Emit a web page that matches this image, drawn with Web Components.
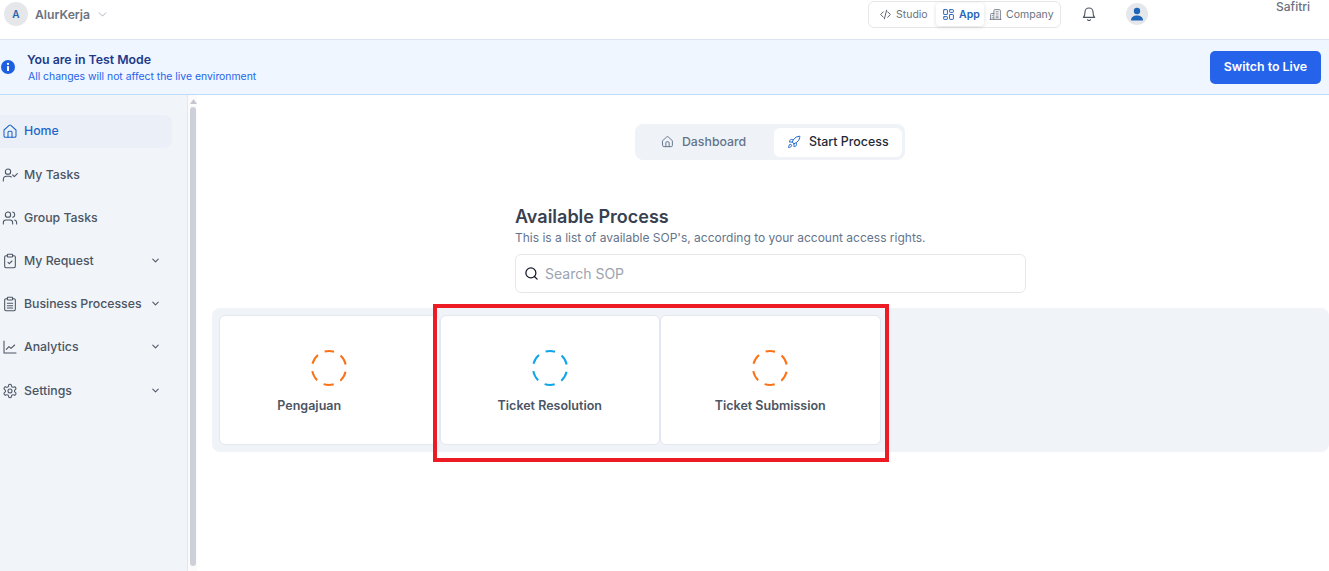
<!DOCTYPE html>
<html lang="en">
<head>
<meta charset="utf-8">
<title>Available Process</title>
<style>
	html, body { margin: 0; height: 100%; overflow: hidden; background: #fff; }
	body { font-family: Inter, "Noto Sans", sans-serif; color: #374151; }
	app-page { height: 571px; }
</style>
</head>
<body>
<app-page>
	<top-bar slot="top"></top-bar>
	<test-banner slot="top"></test-banner>
	<side-nav slot="side">
		<nav-item icon="home" active>Home</nav-item>
		<nav-item icon="task" gap="11">My Tasks</nav-item>
		<nav-item icon="group" gap="10">Group Tasks</nav-item>
		<nav-item icon="request" gap="10" more>My Request</nav-item>
		<nav-item icon="clipboard" gap="10" more>Business Processes</nav-item>
		<nav-item icon="chart" gap="10" more>Analytics</nav-item>
		<nav-item icon="gear" gap="11" more>Settings</nav-item>
	</side-nav>
	<process-tabs></process-tabs>
	<process-head></process-head>
	<process-list>
		<process-card color="#f97316" shift="40">Pengajuan</process-card>
		<process-card color="#0ea5e9">Ticket Resolution</process-card>
		<process-card color="#f97316">Ticket Submission</process-card>
	</process-list>
</app-page>

<script>
	const icons = {
		home: '<path d="M3 10.500 10.700 3.500a2 2 0 0 1 2.600 0L21 10.500V19.500a2 2 0 0 1-2 2H5a2 2 0 0 1-2-2z"/><path d="M9 21.500V14a1.500 1.500 0 0 1 1.500-1.500h3A1.500 1.500 0 0 1 15 14v7.500"/>',
		task: '<circle cx="9" cy="7" r="4"/><path d="M2 21v-2a5 5 0 0 1 5-5h4a5 5 0 0 1 3 1"/><path d="m16 12 2.500 2.500L23 10"/>',
		group: '<circle cx="9" cy="7" r="4"/><path d="M2 21v-2a4 4 0 0 1 4-4h6a4 4 0 0 1 4 4v2"/><path d="M16 3.100a4 4 0 0 1 0 7.800"/><path d="M22 21v-2a4 4 0 0 0-3-3.900"/>',
		request: '<rect x="8" y="2" width="8" height="4" rx="1"/><path d="M16 4h2a2 2 0 0 1 2 2v14a2 2 0 0 1-2 2H6a2 2 0 0 1-2-2V6a2 2 0 0 1 2-2h2"/><path d="m9 14 2 2 4-4"/>',
		clipboard: '<rect x="8" y="2" width="8" height="4" rx="1"/><path d="M16 4h2a2 2 0 0 1 2 2v14a2 2 0 0 1-2 2H6a2 2 0 0 1-2-2V6a2 2 0 0 1 2-2h2"/><path d="M8 11h8M8 14.500h8M8 18h8"/>',
		chart: '<path d="M3 3v18h18"/><path d="m6.500 15.500 4-4 3 2.500 5.500-5"/>',
		gear: '<circle cx="12" cy="12" r="3"/><path d="M12.200 2h-.4a2 2 0 0 0-2 2v.2a2 2 0 0 1-1 1.700l-.4.3a2 2 0 0 1-2 0l-.2-.1a2 2 0 0 0-2.700.7l-.2.4a2 2 0 0 0 .7 2.700l.2.1a2 2 0 0 1 1 1.700v.5a2 2 0 0 1-1 1.800l-.2.1a2 2 0 0 0-.7 2.700l.2.4a2 2 0 0 0 2.700.7l.2-.1a2 2 0 0 1 2 0l.4.3a2 2 0 0 1 1 1.700v.2a2 2 0 0 0 2 2h.4a2 2 0 0 0 2-2v-.2a2 2 0 0 1 1-1.700l.4-.3a2 2 0 0 1 2 0l.2.1a2 2 0 0 0 2.700-.7l.2-.4a2 2 0 0 0-.7-2.700l-.2-.1a2 2 0 0 1-1-1.800v-.5a2 2 0 0 1 1-1.700l.2-.1a2 2 0 0 0 .7-2.700l-.2-.4a2 2 0 0 0-2.700-.7l-.2.1a2 2 0 0 1-2 0l-.4-.3a2 2 0 0 1-1-1.700V4a2 2 0 0 0-2-2z"/>',
		chevron: '<path d="m6 9 6 6 6-6"/>',
		code: '<path d="m8 7-5 5 5 5M16 7l5 5-5 5M14 4l-4 16"/>',
		grid: '<rect x="3" y="3" width="7" height="9" rx="1"/><rect x="14" y="3" width="7" height="5" rx="1"/><rect x="14" y="12" width="7" height="9" rx="1"/><rect x="3" y="16" width="7" height="5" rx="1"/>',
		building: '<path d="M9 21V5a2 2 0 0 1 2-2h8a2 2 0 0 1 2 2v16"/><path d="M9 10H5a2 2 0 0 0-2 2v9"/><path d="M2 21h20M13 7h4M13 11h4M13 15h4M13 18h4M6 14h.500M6 18h.500"/>',
		bell: '<path d="M6 9a6 6 0 0 1 12 0c0 6 2.500 8 2.500 8h-17S6 15 6 9"/><path d="M10 20.500a2.200 2.200 0 0 0 4 0"/>',
		rocket: '<path d="M4.500 16.500c-1.500 1.300-2 5-2 5s3.700-.5 5-2c.7-.8.700-2.100-.100-2.900a2.200 2.200 0 0 0-2.900-.1"/><path d="m12 15-3-3a22 22 0 0 1 2-3.950A12.900 12.900 0 0 1 22 2c0 2.700-.8 7.500-6 11a22 22 0 0 1-4 2"/><path d="M9 12H4s.55-3.030 2-4c1.620-1.080 5 0 5 0M12 15v5s3.030-.55 4-2c1.080-1.620 0-5 0-5"/>',
		search: '<circle cx="11" cy="11" r="8"/><path d="m21 21-4.300-4.300"/>'
	};

	const svg = (name, size, width = 2) =>
		`<svg width="${size}" height="${size}" viewBox="0 0 24 24" fill="none" stroke="currentColor" stroke-width="${width}" stroke-linecap="round" stroke-linejoin="round">${icons[name]}</svg>`;

	class BaseElement extends HTMLElement {
		constructor(markup) {
			super();
			this.attachShadow({ mode: "open" });
			this.shadowRoot.innerHTML = markup;
		}
	}

	class AppPage extends BaseElement {
		constructor() {
			super(`
				<style>
					:host { display: flex; flex-direction: column; position: relative; overflow: hidden; }
					.body { flex: 1; display: flex; min-height: 0; }
					.side { display: flex; }
					main { flex: 1; min-width: 0; padding: 29px 0 0 15px; box-sizing: border-box; }
					.mark {
						position: absolute; left: 433px; top: 304px; width: 456px; height: 158px;
						box-sizing: border-box; border: 4px solid #ed1c24; pointer-events: none;
					}
				</style>
				<slot name="top"></slot>
				<div class="body">
					<div class="side"><slot name="side"></slot></div>
					<main><slot></slot></main>
				</div>
				<div class="mark"></div>
			`);
		}
	}

	class TopBar extends BaseElement {
		constructor() {
			super(`
				<style>
					:host { display: flex; align-items: center; height: 39px; box-sizing: border-box; padding: 0 0 11px 4px; background: #fff; position: relative; }
					.avatar { width: 24px; height: 24px; border-radius: 50%; background: #e5e7eb; color: #2563a8; display: grid; place-items: center; font-size: 10px; font-weight: 600; }
					.name { margin-left: 7px; font-size: 12.200px; font-weight: 600; color: #6b7280; }
					.caret { margin-left: 6px; color: #9ca3af; display: flex; }
					.switch { margin-left: auto; display: flex; align-items: center; width: 193px; height: 27px; box-sizing: border-box; border: 1px solid #e5e7eb; border-radius: 6px; padding: 2px; font-size: 10.500px; color: #6b7280; }
					.switch span { display: flex; align-items: center; height: 23px; gap: 4px; }
					.studio { width: 65px; box-sizing: border-box; padding-left: 8px; }
					.studio svg { color: #374151; }
					.app { width: 48px; box-sizing: border-box; padding-left: 6px; color: #2563b8; font-weight: 600; background: #fff; border-radius: 4px; box-shadow: 0 1px 4px rgba(0,0,0,.14); }
					.company { padding-left: 5px; }
					.bell { margin-left: 20px; display: flex; color: #4b5563; }
					.user { margin-left: 29px; margin-right: 181px; width: 22px; height: 22px; border-radius: 50%; background: #e5e7eb; display: grid; place-items: center; }
					.who { position: absolute; left: 1276px; top: 0; font-size: 12px; line-height: 13px; color: #6b7280; font-weight: 500; }
				</style>
				<div class="avatar">A</div>
				<div class="name">AlurKerja</div>
				<div class="caret">${svg("chevron", 13, 1.500)}</div>
				<div class="switch">
					<span class="studio">${svg("code", 13, 1.500)}Studio</span>
					<span class="app">${svg("grid", 13, 1.800)}App</span>
					<span class="company">${svg("building", 13, 1.600)}Company</span>
				</div>
				<div class="bell">${svg("bell", 16, 1.700)}</div>
				<div class="user">
					<svg width="14" height="14" viewBox="0 0 14 14" fill="#1f66b8"><circle cx="7" cy="4" r="3.200"/><path d="M1 13.500c0-3.500 2.500-5 6-5s6 1.500 6 5z"/></svg>
				</div>
				<div class="who">Safitri</div>
			`);
		}
	}

	class TestBanner extends BaseElement {
		constructor() {
			super(`
				<style>
					:host { display: flex; align-items: center; height: 56px; box-sizing: border-box; padding: 0 8px 0 1px; background: #eff6ff; border-top: 1px solid #dbe4f0; border-bottom: 1px solid #bfdbfe; }
					.info { display: flex; margin-right: 12px; }
					.text { flex: 1; padding-top: 2px; }
					.title { font-size: 12.300px; font-weight: 600; color: #1e3a8a; line-height: 16px; margin-bottom: 2px; }
					.sub { font-size: 10.400px; color: #2563eb; line-height: 14px; margin-left: 1px; }
					button { width: 111px; height: 33px; border: 0; border-radius: 5px; padding: 0 0 2px; background: #2563eb; color: #fff; font: 600 12.400px Inter, sans-serif; }
				</style>
				<div class="info">
					<svg width="14" height="14" viewBox="0 0 14 14"><circle cx="7" cy="7" r="7" fill="#1d5fe0"/><circle cx="7" cy="3.900" r="1.100" fill="#fff"/><rect x="6" y="6" width="2" height="5" rx=".6" fill="#fff"/></svg>
				</div>
				<div class="text">
					<div class="title">You are in Test Mode</div>
					<div class="sub">All changes will not affect the live environment</div>
				</div>
				<button>Switch to Live</button>
			`);
		}
	}

	class SideNav extends BaseElement {
		constructor() {
			super(`
				<style>
					:host { display: flex; width: 197px; height: 100%; }
					nav { width: 188px; box-sizing: border-box; background: #f1f4f9; border-right: 1px solid #e5e7eb; padding: 20px 15px 0 0; }
					.bar { width: 9px; background: #fbfbfc; box-sizing: border-box; padding: 0 1px 5px 2px; display: flex; flex-direction: column; align-items: stretch; }
					.arrow { height: 12px; display: grid; place-items: center; }
					.thumb { flex: 1; background: #cdd0d8; border-radius: 4px; }
				</style>
				<nav><slot></slot></nav>
				<div class="bar">
					<div class="arrow"><svg width="7" height="5" viewBox="0 0 7 5"><path d="M3.500 0 7 5H0z" fill="#c4c7cf"/></svg></div>
					<div class="thumb"></div>
				</div>
			`);
		}
	}

	class NavItem extends BaseElement {
		constructor() {
			super(`
				<style>
					:host { display: flex; align-items: center; height: 33px; box-sizing: border-box; padding: 0 12px 2px 2px; border-radius: 0 8px 8px 0; font-size: 12.300px; font-weight: 500; color: #4b5563; }
					:host([active]) { background: #ebf0f8; color: #1f66c8; }
					.icon { display: flex; width: 16px; margin-right: 6px; }
					.label { flex: 1; white-space: nowrap; }
					.more { display: flex; color: #4b5563; margin-right: -1px; }
				</style>
				<span class="icon"></span><span class="label"><slot></slot></span><span class="more"></span>
			`);
		}

		connectedCallback() {
			this.shadowRoot.querySelector(".icon").innerHTML = svg(this.getAttribute("icon"), 16, 1.600);
			if (this.hasAttribute("more")) {
				this.shadowRoot.querySelector(".more").innerHTML = svg("chevron", 11, 2.200);
			}
			if (this.hasAttribute("gap")) {
				this.style.marginTop = `${this.getAttribute("gap")}px`;
			}
		}
	}

	class ProcessTabs extends BaseElement {
		constructor() {
			super(`
				<style>
					:host { display: flex; width: 270px; height: 36px; box-sizing: border-box; margin-left: 423px; padding: 4px 3px 3px 0; background: #eff3f8; border-radius: 8px; font-size: 12.400px; font-weight: 500; }
					div { display: flex; align-items: center; height: 29px; padding-bottom: 2px; box-sizing: border-box; }
					.dash { width: 139px; padding-left: 26px; gap: 8px; color: #64748b; font-size: 12.300px; }
					.start { width: 128px; padding-left: 13px; gap: 8px; background: #fff; border-radius: 6px; color: #1f2937; }
					.start svg { color: #1f66c8; }
				</style>
				<div class="dash">${svg("home", 13, 1.800)}Dashboard</div>
				<div class="start">${svg("rocket", 14, 1.700)}Start Process</div>
			`);
		}
	}

	class ProcessHead extends BaseElement {
		constructor() {
			super(`
				<style>
					:host { display: block; width: 511px; margin: 46px 0 15px 303px; }
					h2 { margin: 0; font-size: 18px; line-height: 22px; font-weight: 600; color: #374151; }
					p { margin: 2px 0 8px; font-size: 12px; line-height: 16px; color: #64748b; }
					.search { display: flex; align-items: center; height: 39px; box-sizing: border-box; border: 1px solid #e5e7eb; border-radius: 6px; padding: 0 8px; gap: 6px; color: #111827; }
					input { flex: 1; border: 0; outline: 0; background: none; padding: 0; font: 14px Inter, sans-serif; }
					input::placeholder { color: #9ca3af; opacity: 1; }
				</style>
				<h2>Available Process</h2>
				<p>This is a list of available SOP's, according to your account access rights.</p>
				<div class="search">${svg("search", 15, 2)}<input placeholder="Search SOP"></div>
			`);
		}
	}

	class ProcessList extends BaseElement {
		constructor() {
			super(`
				<style>
					:host { display: flex; height: 144px; box-sizing: border-box; padding: 7px; background: #f0f3f8; border-radius: 8px; }
				</style>
				<slot></slot>
			`);
		}
	}

	class ProcessCard extends BaseElement {
		constructor() {
			super(`
				<style>
					:host { display: flex; flex-direction: column; align-items: center; width: 220.500px; height: 130px; box-sizing: border-box; background: #fff; border: 1px solid #e2e8f0; border-radius: 6px; padding-top: 33px; font-size: 12.500px; font-weight: 600; color: #4b5563; }
					svg { display: block; margin-bottom: 11px; }
				</style>
				<svg width="38" height="38" viewBox="0 0 38 38" fill="none" stroke-width="2"><circle class="ring" cx="19" cy="19" r="17" stroke-dasharray="10.300 7.500" stroke-dashoffset="5.150" transform="rotate(-90 19 19)"/></svg>
				<span class="label"><slot></slot></span>
			`);
		}

		connectedCallback() {
			this.shadowRoot.querySelector(".ring").setAttribute("stroke", this.getAttribute("color"));
			if (this.hasAttribute("shift")) {
				this.shadowRoot.querySelector(".label").style.marginRight = `${this.getAttribute("shift")}px`;
			}
		}
	}

	customElements.define("app-page", AppPage);
	customElements.define("top-bar", TopBar);
	customElements.define("test-banner", TestBanner);
	customElements.define("side-nav", SideNav);
	customElements.define("nav-item", NavItem);
	customElements.define("process-tabs", ProcessTabs);
	customElements.define("process-head", ProcessHead);
	customElements.define("process-list", ProcessList);
	customElements.define("process-card", ProcessCard);
</script>
</body>
</html>
